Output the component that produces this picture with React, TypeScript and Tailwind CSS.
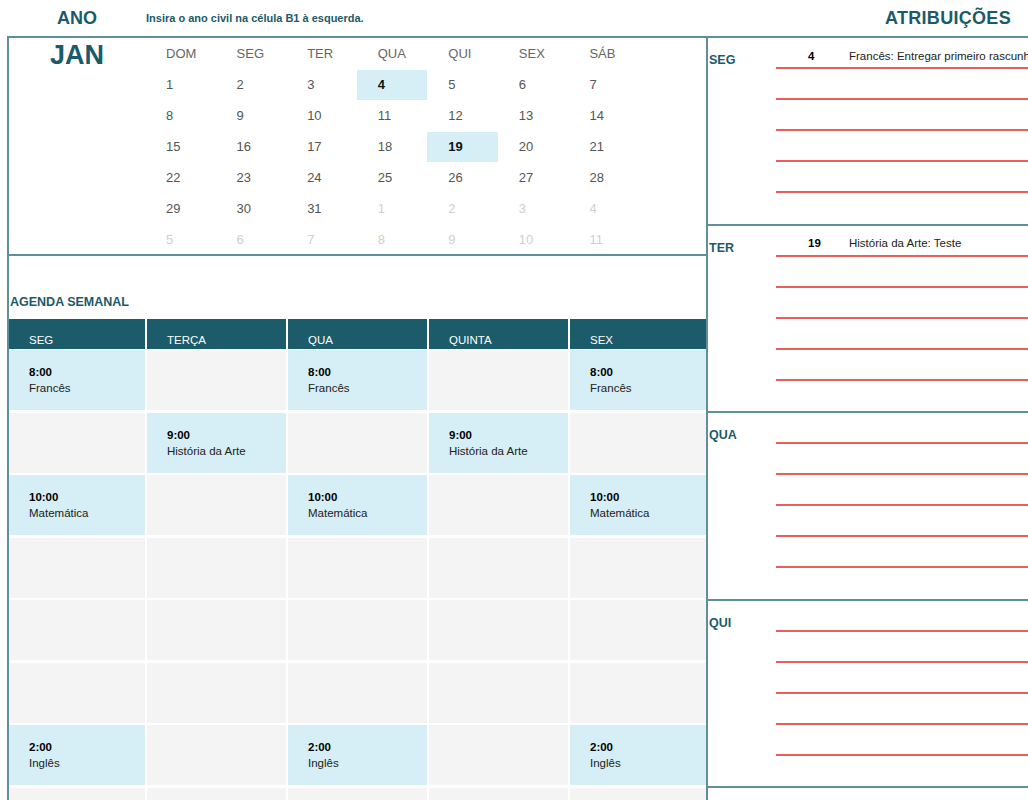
const TEAL = "text-[#1b5a6a]";

const DAYS = ["DOM", "SEG", "TER", "QUA", "QUI", "SEX", "SÁB"];

type Day = { n: number; muted?: boolean; hot?: boolean };

const WEEKS: Day[][] = [
  [{ n: 1 }, { n: 2 }, { n: 3 }, { n: 4, hot: true }, { n: 5 }, { n: 6 }, { n: 7 }],
  [{ n: 8 }, { n: 9 }, { n: 10 }, { n: 11 }, { n: 12 }, { n: 13 }, { n: 14 }],
  [{ n: 15 }, { n: 16 }, { n: 17 }, { n: 18 }, { n: 19, hot: true }, { n: 20 }, { n: 21 }],
  [{ n: 22 }, { n: 23 }, { n: 24 }, { n: 25 }, { n: 26 }, { n: 27 }, { n: 28 }],
  [{ n: 29 }, { n: 30 }, { n: 31 }, { n: 1, muted: true }, { n: 2, muted: true }, { n: 3, muted: true }, { n: 4, muted: true }],
  [5, 6, 7, 8, 9, 10, 11].map((n) => ({ n, muted: true })),
];

const COLS = ["SEG", "TERÇA", "QUA", "QUINTA", "SEX"];

type Slot = { time: string; subject: string } | null;

const fr = { time: "8:00", subject: "Francês" };
const art = { time: "9:00", subject: "História da Arte" };
const mat = { time: "10:00", subject: "Matemática" };
const ing = { time: "2:00", subject: "Inglês" };

const SCHEDULE: Slot[][] = [
  [fr, null, fr, null, fr],
  [null, art, null, art, null],
  [mat, null, mat, null, mat],
  [null, null, null, null, null],
  [null, null, null, null, null],
  [null, null, null, null, null],
  [ing, null, ing, null, ing],
  [null, null, null, null, null],
];

const ASSIGNMENTS = [
  { day: "SEG", date: "4", text: "Francês: Entregar primeiro rascunho" },
  { day: "TER", date: "19", text: "História da Arte: Teste" },
  { day: "QUA" },
  { day: "QUI" },
];

function MiniCalendar() {
  return (
    <div className="flex h-[218px] border-b-2 border-[#5f8f9b]">
      <div className="w-[136px] pt-[2px] text-center">
        <span className={`text-[27px] font-bold leading-[30px] ${TEAL}`}>JAN</span>
      </div>
      <div className="grid w-[494px] grid-cols-7">
        {DAYS.map((d) => (
          <div key={d} className="flex h-[31px] items-center pl-[21px] text-[13px] text-[#666]">
            {d}
          </div>
        ))}
        {WEEKS.flat().map((day, i) => (
          <div key={i} className="h-[31px] py-[0.5px]">
            <div
              className={
                "flex h-[30px] items-center pl-[21px] text-[13px] " +
                (day.hot
                  ? "bg-[#d6eef5] font-bold text-[#111]"
                  : day.muted
                  ? "text-[#cfcfcf]"
                  : "text-[#555]")
              }
            >
              {day.n}
            </div>
          </div>
        ))}
      </div>
    </div>
  );
}

function WeeklyAgenda() {
  return (
    <div>
      <div className="flex h-[63px] items-end pb-[7px] pl-[1px]">
        <span className={`text-[12.5px] font-bold ${TEAL}`}>AGENDA SEMANAL</span>
      </div>
      <div className="grid grid-cols-[136px_139px_139px_139px_136px] gap-x-[2px] gap-y-[2.5px]">
        {COLS.map((c) => (
          <div key={c} className="mb-[-1.5px] flex h-[30px] items-end bg-[#1c5b6a] pl-[20px] text-[11.5px] text-white">
            {c}
          </div>
        ))}
        {SCHEDULE.flat().map((slot, i) => (
          <div
            key={i}
            className={"h-[60px] pl-[20px] pt-[14px] text-[11.5px] leading-[16px] text-[#222] " + (slot ? "bg-[#d6eef5]" : "bg-[#f4f4f4]")}
          >
            {slot && (
              <>
                <div className="font-bold text-black">{slot.time}</div>
                <div>{slot.subject}</div>
              </>
            )}
          </div>
        ))}
      </div>
    </div>
  );
}

function AssignmentDay({ day, date, text }: { day: string; date?: string; text?: string }) {
  return (
    <div className="flex h-[187.5px] border-b-2 border-[#5f8f9b]">
      <div className={`w-[68px] shrink-0 pl-[1px] pt-[13px] text-[12.5px] font-bold ${TEAL}`}>{day}</div>
      <div className="min-w-0 flex-1">
        {[0, 1, 2, 3, 4].map((i) => (
          <div key={i} className="flex h-[31px] items-end border-b-2 border-[#e8605c] pb-[2px] text-[11.5px] whitespace-nowrap">
            {i === 0 && date && (
              <>
                <span className="w-[73px] shrink-0 pl-[32px] font-bold text-black">{date}</span>
                <span className="text-[#222]">{text}</span>
              </>
            )}
          </div>
        ))}
      </div>
    </div>
  );
}

export default function App() {
  return (
    <div className="h-[800px] w-[1028px] overflow-hidden bg-white font-['Liberation_Sans',Arial,sans-serif]">
      <div className="flex h-[36px] items-center">
        <div className={`w-[146px] pl-[8px] text-center text-[18px] font-bold ${TEAL}`}>ANO</div>
        <div className={`text-[11px] font-bold ${TEAL}`}>Insira o ano civil na célula B1 à esquerda.</div>
        <div className={`ml-auto pr-[17px] text-[18px] font-bold tracking-[0.3px] ${TEAL}`}>ATRIBUIÇÕES</div>
      </div>
      <div className="flex">
        <div className="ml-[7px] w-[699px] shrink-0 border-l-2 border-t-2 border-[#5f8f9b]">
          <MiniCalendar />
          <WeeklyAgenda />
        </div>
        <div className="min-w-0 flex-1 border-l-2 border-t-2 border-[#5f8f9b]">
          {ASSIGNMENTS.map((a) => (
            <AssignmentDay key={a.day} {...a} />
          ))}
        </div>
      </div>
    </div>
  );
}
